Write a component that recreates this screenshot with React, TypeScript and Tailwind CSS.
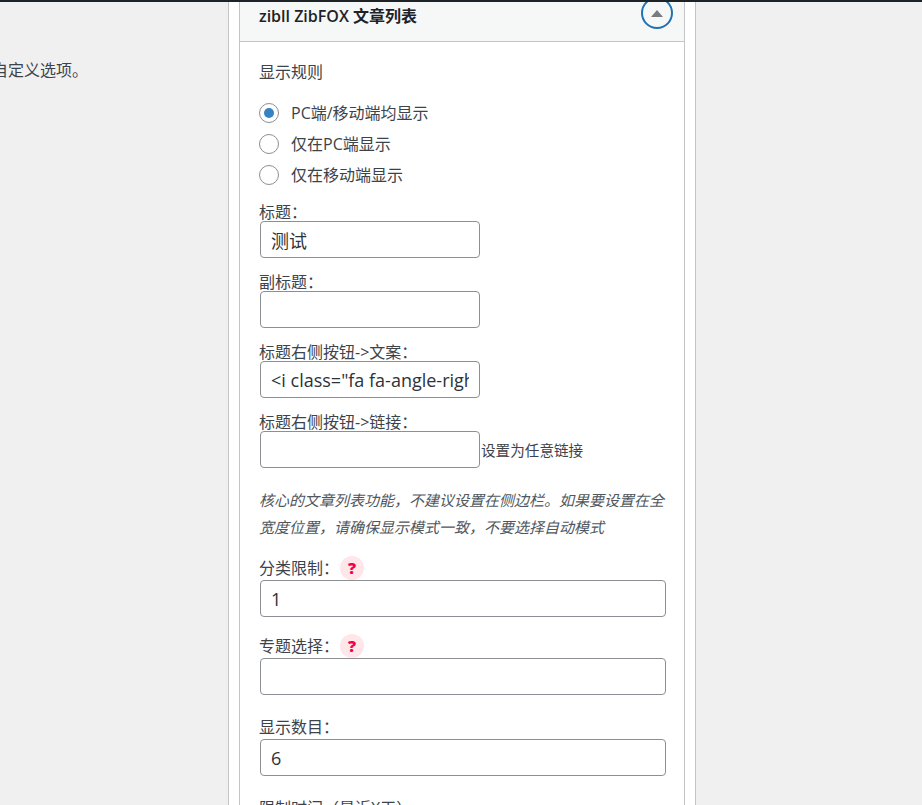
import React from "react";

const cjk = '"Open Sans", "Noto Sans CJK SC", sans-serif';

const inputClass =
  "ml-[1px] block h-[37px] rounded-[4px] border border-[#8c8f94] bg-white px-[10px] text-[18px] leading-[35px] text-[#2c3338] outline-none";

const rules = ["PC端/移动端均显示", "仅在PC端显示", "仅在移动端显示"];

const HelpBadge = () => (
  <span className="ml-[1px] flex h-[24px] w-[24px] items-center justify-center rounded-full bg-[#ffe6e8] text-[16px] font-extrabold leading-none text-[#f5004f]">
    ?
  </span>
);

const Field = ({
  label,
  value = "",
  help = false,
  wide = false,
  suffix,
  className = "",
}: {
  label: string;
  value?: string;
  help?: boolean;
  wide?: boolean;
  suffix?: string;
  className?: string;
}) => (
  <div className={className}>
    <div
      className={`flex items-center text-[16px] leading-[18px] text-[#3c434a] ${
        wide ? "h-[24px]" : "h-[18px]"
      }`}
    >
      {label}
      {help && <HelpBadge />}
    </div>
    <div className="flex items-end">
      <input
        readOnly
        value={value}
        style={{ fontFamily: cjk }}
        className={`${inputClass} ${wide ? "w-[406px]" : "w-[220px]"}`}
      />
      {suffix && (
        <span className="mb-[7px] ml-[1px] text-[14.6px] leading-[21px] text-[#3c434a]">
          {suffix}
        </span>
      )}
    </div>
  </div>
);

export default function App() {
  return (
    <div
      className="flex h-[805px] w-[922px] flex-col overflow-hidden bg-[#f0f0f1]"
      style={{ fontFamily: cjk }}
    >
      <div className="h-[2px] shrink-0 bg-[#1d2327]" />
      <div className="flex min-h-0 flex-1">
        <div className="w-[228px] shrink-0 overflow-hidden pt-[56px]">
          <p className="-ml-[8px] whitespace-nowrap text-[16px] leading-[24px] text-[#3c434a]">
            自定义选项。
          </p>
        </div>

        <div className="w-[468px] shrink-0 border-x border-[#c3c4c7] bg-white px-[10px]">
          <div className="h-full border-x border-[#c3c4c7]">
            <div className="flex h-[40px] items-start justify-between overflow-hidden border-b border-[#c3c4c7] bg-[#f6f7f7] pl-[19px] pr-[11px]">
              <h3 className="mt-[2px] text-[16px] font-semibold leading-[24px] text-[#1d2327]">
                zibll ZibFOX 文章列表
              </h3>
              <button className="-mt-[5px] flex h-[32px] w-[32px] shrink-0 items-center justify-center rounded-full border-2 border-[#2271b1]">
                <span className="h-0 w-0 border-x-[6px] border-b-[7px] border-x-transparent border-b-[#787c82]" />
              </button>
            </div>

            <div className="pl-[19px]">
              <p className="mt-[18px] text-[16px] leading-[24px] text-[#3c434a]">
                显示规则
              </p>
              <div className="mt-[19px] flex flex-col gap-[11px]">
                {rules.map((rule, i) => (
                  <div key={rule} className="flex h-[20px] items-center">
                    <span className="flex h-[20px] w-[20px] items-center justify-center rounded-full border border-[#8c8f94] bg-white">
                      {i === 0 && (
                        <span className="h-[10px] w-[10px] rounded-full bg-[#3582c4]" />
                      )}
                    </span>
                    <span className="ml-[12px] text-[16px] leading-[20px] text-[#3c434a]">
                      {rule}
                    </span>
                  </div>
                ))}
              </div>

              <Field className="mt-[18px]" label="标题：" value="测试" />
              <Field className="mt-[15px]" label="副标题：" />
              <Field
                className="mt-[15px]"
                label="标题右侧按钮->文案："
                value={'<i class="fa fa-angle-right"></i>'}
              />
              <Field
                className="mt-[15px]"
                label="标题右侧按钮->链接："
                suffix="设置为任意链接"
              />

              <p className="mt-[19px] w-[410px] text-[15px] italic leading-[27px] text-[#50575e]">
                核心的文章列表功能，不建议设置在侧边栏。如果要设置在全宽度位置，请确保显示模式一致，不要选择自动模式
              </p>

              <Field className="mt-[15px]" label="分类限制：" value="1" help wide />
              <Field className="mt-[17px]" label="专题选择：" help wide />
              <Field className="mt-[20px]" label="显示数目：" value="6" wide />
              <p className="mt-[20px] text-[16px] leading-[24px] text-[#3c434a]">
                限制时间（最近X天）
              </p>
            </div>
          </div>
        </div>
      </div>
    </div>
  );
}
